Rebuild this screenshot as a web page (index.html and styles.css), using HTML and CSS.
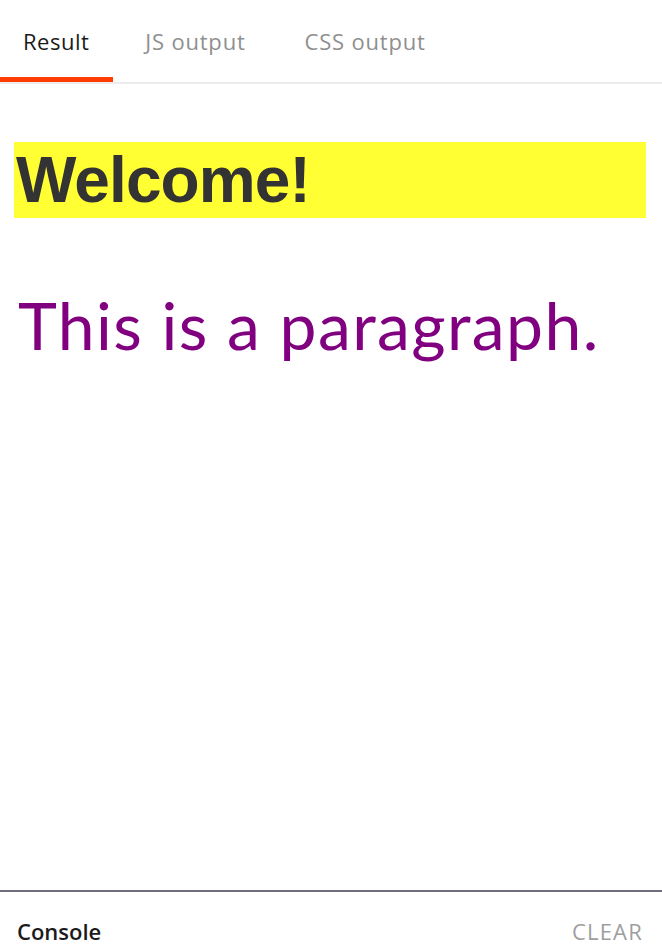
FILE: index.html
```html
<!DOCTYPE html>
<html lang="en">
<head>
<meta charset="utf-8">
<title>Result</title>
<link rel="stylesheet" href="styles.css">
</head>
<body>
<div class="app">
  <nav class="tabs">
    <div class="tab active">Result</div>
    <div class="tab">JS output</div>
    <div class="tab">CSS output</div>
  </nav>
  <main class="output">
    <h1 class="welcome">Welcome!</h1>
    <p class="para">This is a paragraph.</p>
  </main>
  <footer class="console">
    <span class="console-title">Console</span>
    <span class="console-clear">CLEAR</span>
  </footer>
</div>
</body>
</html>
```

FILE: styles.css
```css
html, body {
  margin: 0;
  padding: 0;
  height: 100%;
  background: #fff;
}
.app {
  display: flex;
  flex-direction: column;
  height: 100vh;
  font-family: "Open Sans", "Noto Sans", sans-serif;
}
.tabs {
  display: flex;
  height: 82px;
  border-bottom: 2px solid #ececec;
  flex-shrink: 0;
}
.tab {
  display: flex;
  align-items: center;
  padding: 5px 23px 0;
  font-size: 22px;
  letter-spacing: 0.8px;
  color: #8f8f8f;
  border-bottom: 5px solid transparent;
  margin-right: 13px;
}
.tab.active {
  color: #1b1b1b;
  border-bottom-color: #ff3d00;
  margin-right: 9px;
  padding: 5px 24px 0 23px;
  letter-spacing: 0.5px;
}
.output {
  flex: 1;
  padding: 58px 16px 0 14px;
}
.welcome {
  margin: 0;
  height: 76px;
  line-height: 76px;
  background: #ffff33;
  color: #333;
  font-family: "Liberation Sans", Arial, sans-serif;
  font-weight: bold;
  font-size: 64px;
  letter-spacing: -0.9px;
  padding-left: 2px;
}
.para {
  margin: 67px 0 0 4px;
  color: #800080;
  font-family: "Lato", "Open Sans", sans-serif;
  font-size: 66px;
  line-height: 80px;
  letter-spacing: 1.4px;
}
.console {
  flex-shrink: 0;
  border-top: 2px solid #6e6d7a;
  display: flex;
  align-items: center;
  justify-content: space-between;
  padding: 22px 19px 0 17px;
  box-sizing: border-box;
  height: 58px;
  font-size: 22px;
}
.console-title {
  font-weight: 600;
  color: #1b1b1b;
}
.console-clear {
  color: #9e9e9e;
  letter-spacing: 1.2px;
}
```
